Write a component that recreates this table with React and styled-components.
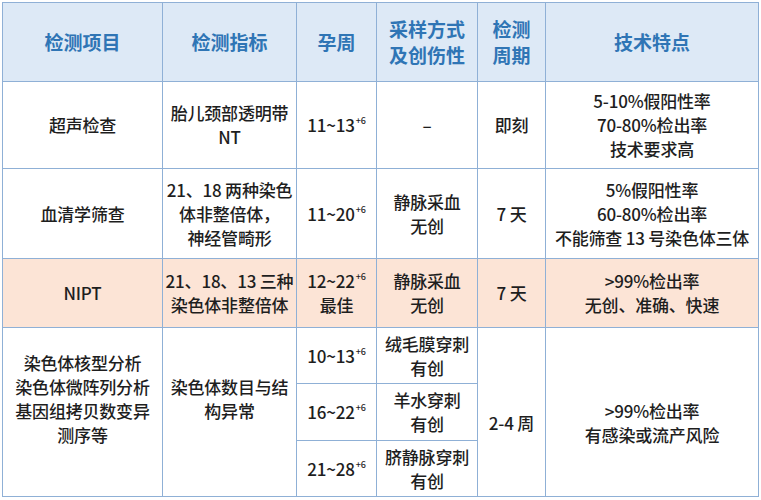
import React from 'react';
import styled, { createGlobalStyle } from 'styled-components';

const GlobalStyle = createGlobalStyle`
  html, body {
    margin: 0;
    padding: 0;
    background: #ffffff;
  }
  body {
    font-family: "Noto Sans CJK SC", "Noto Sans", sans-serif;
  }
`;

const Page = styled.div`
  padding: 2px 3px 4px 2px;
`;

const Table = styled.table`
  width: 756px;
  height: 494px;
  border-collapse: collapse;
  table-layout: fixed;
  border: 1.5px solid #9fb6cf;
`;

const HeadCell = styled.th`
  background: #dde9f6;
  color: #2f75b5;
  font-size: 19px;
  font-weight: 700;
  line-height: 26px;
  text-align: center;
  vertical-align: middle;
  border: 1px solid #8fb0d6;
  padding: 0;
`;

const Row = styled.tr`
  height: ${(p) => p.h}px;
  background: ${(p) => (p.highlight ? '#fce4d6' : '#ffffff')};
`;

// $up / $down nudge the text inside tall merged cells
const Cell = styled.td`
  color: #1e1e1e;
  font-size: 17px;
  font-weight: 500;
  line-height: 24px;
  text-align: center;
  vertical-align: middle;
  border: 1px solid #8fb0d6;
  padding: ${(p) => p.$down || 0}px 2px ${(p) => p.$up || 0}px;
  letter-spacing: -0.2px;
`;

const Sup = styled.sup`
  font-size: 9px;
  line-height: 0;
  vertical-align: 8px;
  margin-left: 1px;
`;

const Weeks = ({ from, to }) => (
  <>
    {from}~{to}
    <Sup>+6</Sup>
  </>
);

const Lines = ({ items }) =>
  items.map((t, i) => (
    <React.Fragment key={i}>
      {i > 0 && <br />}
      {t}
    </React.Fragment>
  ));

const App = () => (
  <Page>
    <GlobalStyle />
    <Table>
      <colgroup>
        <col style={{ width: 160 }} />
        <col style={{ width: 134 }} />
        <col style={{ width: 80 }} />
        <col style={{ width: 101 }} />
        <col style={{ width: 68 }} />
        <col style={{ width: 213 }} />
      </colgroup>
      <thead>
        <Row h={79}>
          <HeadCell>检测项目</HeadCell>
          <HeadCell>检测指标</HeadCell>
          <HeadCell>孕周</HeadCell>
          <HeadCell>
            <Lines items={['采样方式', '及创伤性']} />
          </HeadCell>
          <HeadCell>
            <Lines items={['检测', '周期']} />
          </HeadCell>
          <HeadCell>技术特点</HeadCell>
        </Row>
      </thead>
      <tbody>
        <Row h={87}>
          <Cell>超声检查</Cell>
          <Cell>
            <Lines items={['胎儿颈部透明带', 'NT']} />
          </Cell>
          <Cell>
            <Weeks from="11" to="13" />
          </Cell>
          <Cell>–</Cell>
          <Cell>即刻</Cell>
          <Cell>
            <Lines items={['5-10%假阳性率', '70-80%检出率', '技术要求高']} />
          </Cell>
        </Row>
        <Row h={90}>
          <Cell>血清学筛查</Cell>
          <Cell>
            <Lines items={['21、18 两种染色', '体非整倍体，', '神经管畸形']} />
          </Cell>
          <Cell>
            <Weeks from="11" to="20" />
          </Cell>
          <Cell>
            <Lines items={['静脉采血', '无创']} />
          </Cell>
          <Cell>7 天</Cell>
          <Cell>
            <Lines items={['5%假阳性率', '60-80%检出率', '不能筛查 13 号染色体三体']} />
          </Cell>
        </Row>
        <Row h={69} highlight>
          <Cell>NIPT</Cell>
          <Cell>
            <Lines items={['21、18、13 三种', '染色体非整倍体']} />
          </Cell>
          <Cell>
            <Weeks from="12" to="22" />
            <br />
            最佳
          </Cell>
          <Cell>
            <Lines items={['静脉采血', '无创']} />
          </Cell>
          <Cell>7 天</Cell>
          <Cell>
            <Lines items={['>99%检出率', '无创、准确、快速']} />
          </Cell>
        </Row>
        <Row h={56}>
          <Cell rowSpan={3} $up={26}>
            <Lines items={['染色体核型分析', '染色体微阵列分析', '基因组拷贝数变异', '测序等']} />
          </Cell>
          <Cell rowSpan={3} $up={26}>
            <Lines items={['染色体数目与结', '构异常']} />
          </Cell>
          <Cell>
            <Weeks from="10" to="13" />
          </Cell>
          <Cell>
            <Lines items={['绒毛膜穿刺', '有创']} />
          </Cell>
          <Cell rowSpan={3} $down={22}>2-4 周</Cell>
          <Cell rowSpan={3} $down={22}>
            <Lines items={['>99%检出率', '有感染或流产风险']} />
          </Cell>
        </Row>
        <Row h={57}>
          <Cell>
            <Weeks from="16" to="22" />
          </Cell>
          <Cell>
            <Lines items={['羊水穿刺', '有创']} />
          </Cell>
        </Row>
        <Row h={56}>
          <Cell>
            <Weeks from="21" to="28" />
          </Cell>
          <Cell>
            <Lines items={['脐静脉穿刺', '有创']} />
          </Cell>
        </Row>
      </tbody>
    </Table>
  </Page>
);

export default App;
